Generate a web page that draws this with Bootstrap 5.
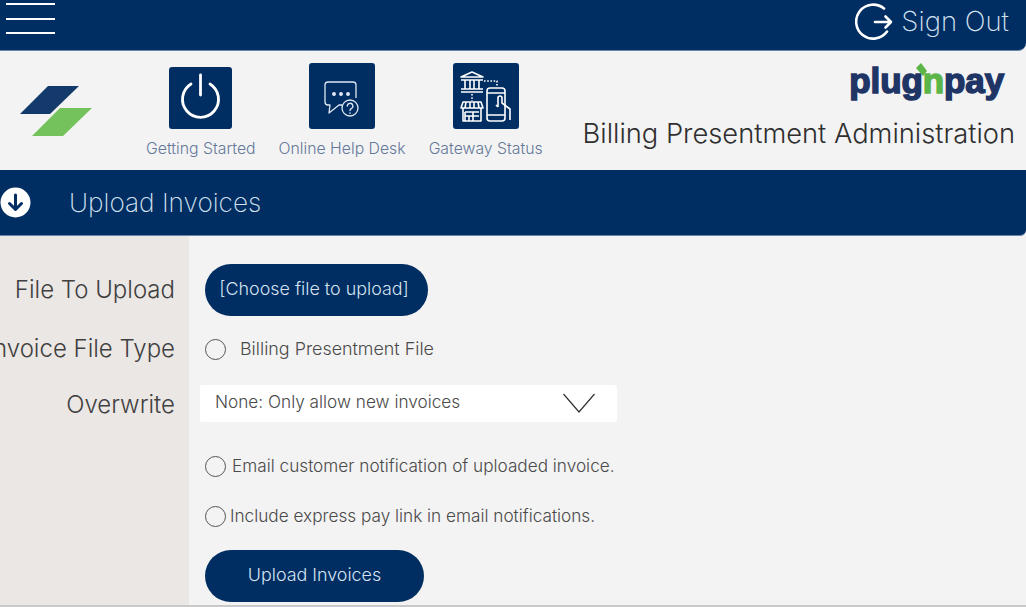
<!DOCTYPE html>
<html lang="en">

<head>
    <meta charset="UTF-8">
    <meta name="viewport" content="width=device-width, initial-scale=1">
    <title>Billing Presentment Administration</title>

    <link rel="stylesheet" href="https://cdn.jsdelivr.net/npm/bootstrap@5.3.2/dist/css/bootstrap.min.css">
    <script src="https://cdn.jsdelivr.net/npm/bootstrap@5.3.2/dist/js/bootstrap.bundle.min.js"></script>

    <style>
        html,
        body {
            height: 607px;
            overflow: hidden;
        }

        body {
            font-family: "Inter", "Liberation Sans", sans-serif;
            font-weight: 300;
            background: #f3f3f3;
            color: #3c3c3c;
        }

        .top-bar {
            height: 51px;
            background: #002d62;
            border-bottom-right-radius: 8px;
            border-bottom: 1px solid #6d85a8;
            padding: 0 17px 0 6px;
        }

        .menu-lines {
            width: 49px;
            height: 31px;
            margin-top: 3px;
            border: 0;
            padding: 0;
            background: none;
        }

        .menu-lines span {
            display: block;
            height: 2px;
            background: #fff;
        }

        .sign-out {
            color: #d5e3f1;
            font-size: 27.5px;
            font-weight: 200;
            text-decoration: none;
            gap: 8px;
            margin-bottom: 6px;
        }

        .head-strip {
            height: 119px;
            padding-left: 20px;
            padding-right: 11px;
        }

        .mark-box {
            width: 72px;
            height: 50px;
            margin-top: 35px;
        }

        .tile-nav {
            gap: 23px;
            margin-left: 54px;
            padding-top: 12px;
        }

        .tile-link {
            color: #64789a;
            font-size: 15.8px;
            text-decoration: none;
            white-space: nowrap;
        }

        .tile {
            background: #002d62;
            border-radius: 3px;
            margin-bottom: 8px;
        }

        .tile-low {
            margin-top: 4px;
        }

        .brand-side {
            text-align: right;
        }

        .plug-logo {
            font-family: "Liberation Sans", sans-serif;
            font-weight: 700;
            font-size: 35px;
            line-height: 1;
            letter-spacing: -.1px;
            color: #1e3566;
            -webkit-text-stroke: 1.5px #1e3566;
            position: relative;
            display: inline-block;
            margin-right: 11px;
            margin-top: 12px;
        }

        .plug-logo b {
            color: #5cb547;
            -webkit-text-stroke: 1.5px #5cb547;
        }

        .plug-logo svg {
            position: absolute;
            left: 66px;
            top: 0;
        }

        .bill-title {
            font-size: 27.3px;
            color: #2f2f2f;
            line-height: 1;
            margin-top: 21px;
            white-space: nowrap;
        }

        .section-bar {
            height: 66px;
            background: #002d62;
            border-bottom-right-radius: 6px;
            border-bottom: 1px solid #6d85a8;
            color: #d5e3f1;
            font-size: 26.2px;
            font-weight: 200;
            gap: 38px;
        }

        .form-grid {
            display: grid;
            grid-template-columns: 189px 1fr;
            grid-template-rows: 84px 58px 50px 62px 50px 1fr;
            height: 371px;
        }

        .lbl-cell {
            background: #ebe7e5;
            font-size: 24px;
            padding-right: 14px;
            white-space: nowrap;
            color: #404040;
        }

        .first-cell {
            padding-top: 28px;
        }

        .first-cell.lbl-cell {
            line-height: 52px;
        }

        .lbl-low {
            padding-top: 4px;
        }

        .pill-btn {
            background: #002d62;
            color: #d5e3f1;
            border-radius: 27px;
            height: 52px;
            font-size: 17.9px;
            font-weight: 300;
            padding: 0 0 2px;
        }

        .pill-btn:hover {
            background: #002d62;
            color: #d5e3f1;
        }

        .pick-btn {
            width: 223px;
            padding-right: 5px;
        }

        .send-btn {
            width: 219px;
            margin-top: 10px;
        }

        .ring {
            width: 21px;
            height: 21px;
            flex: none;
            margin: 0;
            background-color: transparent;
            border: 1.5px solid #555;
        }

        .opt-text {
            font-size: 17.2px;
            color: #4a4a4a;
            margin: 0;
            white-space: nowrap;
        }

        .opt-wide {
            font-size: 17.9px;
        }

        .opt-file {
            gap: 14px;
        }

        .opt-mail {
            padding-top: 14px;
            gap: 6px;
        }

        .opt-pay {
            padding-top: 2px;
            gap: 4px;
        }

        .over-select {
            width: 417px;
            height: 37px;
            margin-left: 11px;
            border: 0;
            border-radius: 2px;
            padding: 0 60px 2px 15px;
            background-color: #fff;
            background-image: url("data:image/svg+xml,%3csvg xmlns='http://www.w3.org/2000/svg' viewBox='0 0 32 20'%3e%3cpath fill='none' stroke='%23333' stroke-width='1.2' d='M0.5 1 16 19 31.5 1'/%3e%3c/svg%3e");
            background-position: right 22px center;
            background-size: 32px 20px;
            font-size: 17.2px;
            font-weight: 300;
            color: #4a4a4a;
        }

        .page-edge {
            position: absolute;
            left: 0;
            right: 0;
            bottom: 0;
            height: 2px;
            background: #c9c9c9;
        }
    </style>
</head>

<body>
    <header class="top-bar d-flex justify-content-between align-items-center">
        <button class="menu-lines d-flex flex-column justify-content-between align-self-start" type="button" aria-label="Menu">
            <span></span><span></span><span></span>
        </button>
        <a class="sign-out d-flex align-items-center" href="#">
            <svg width="38" height="38" viewBox="0 0 38 38" fill="none" stroke="#fff" stroke-width="2.6" stroke-linecap="round" stroke-linejoin="round">
                <path d="M29 5.500A17 17 0 1 0 32 28.500" />
                <path d="M20 19H36M30.500 13.500 36 19l-5.500 5.500" />
            </svg>
            Sign Out
        </a>
    </header>

    <div class="head-strip d-flex">
        <div class="mark-box">
            <svg width="72" height="50" viewBox="0 0 72 50">
                <polygon points="0,28 28,0 59,0 30,28" fill="#133a6b" />
                <polygon points="12,50 40,22 72,22 43,50" fill="#74c25c" />
            </svg>
        </div>

        <nav class="tile-nav d-flex flex-grow-1 align-items-start">
            <a class="tile-link d-flex flex-column align-items-center" href="#">
                <span class="tile tile-low d-flex align-items-center justify-content-center">
                    <svg width="63" height="62" viewBox="0 0 63 62" fill="none" stroke="#fff" stroke-width="2.8" stroke-linecap="round">
                        <path d="M22 17a18 18 0 1 0 19 0" />
                        <path d="M31.500 8V28" />
                    </svg>
                </span>
                Getting Started
            </a>
            <a class="tile-link d-flex flex-column align-items-center" href="#">
                <span class="tile d-flex align-items-center justify-content-center">
                    <svg width="66" height="66" viewBox="0 0 66 66" fill="none" stroke="#dfe8f3" stroke-width="1.300" stroke-linejoin="round">
                        <path d="M47 35V22a3 3 0 0 0-3-3H19a3 3 0 0 0-3 3V39a3 3 0 0 0 3 3h2l-1 8 10-8h3" />
                        <circle cx="25" cy="31" r="1.300" fill="#dfe8f3" />
                        <circle cx="32" cy="31" r="1.300" fill="#dfe8f3" />
                        <circle cx="39" cy="31" r="1.300" fill="#dfe8f3" />
                        <circle cx="41" cy="45" r="8" />
                        <path d="M38.300 43a2.800 2.800 0 1 1 4 2.600c-.9.500-1.300 1-1.300 2M41 50v.4" stroke-linecap="round" />
                    </svg>
                </span>
                Online Help Desk
            </a>
            <a class="tile-link d-flex flex-column align-items-center" href="#">
                <span class="tile d-flex align-items-center justify-content-center">
                    <svg width="66" height="66" viewBox="0 0 66 66" fill="none" stroke="#fff" stroke-width="1.600" stroke-linejoin="round">
                        <path d="M8 14 19 9 30 14ZM8 17H30M8 26H30M8 29H30M12 17V26M17 17V26M21 17V26M26 17V26" />
                        <path d="M31 18H44V24M19 31V38" stroke-dasharray="1.600 1.600" />
                        <path d="M10 39H28L30 45H8ZM13 39 12 45M17 39V45M21 39V45M25 39 26 45M10 45V58H28V45M12 49H26M12 53H26M12 49V58M16 53V58M20 49V58" />
                        <path d="M34 28a3 3 0 0 1 3-3H49a3 3 0 0 1 3 3V55a3 3 0 0 1-3 3H37a3 3 0 0 1-3-3ZM34 30H52M34 52H52" />
                        <path d="M45 44V35a2 2 0 0 1 4 0V40L57 46V57M45 44l-2-2" />
                    </svg>
                </span>
                Gateway Status
            </a>
        </nav>

        <div class="brand-side">
            <div class="plug-logo">
                <svg width="13" height="14" viewBox="0 0 13 14"><polygon points="1,5 6,0 12,8 8,13" fill="#5cb547" /></svg>
                plug<b>n</b>pay
            </div>
            <div class="bill-title">Billing Presentment Administration</div>
        </div>
    </div>

    <div class="section-bar d-flex align-items-center">
        <svg width="31" height="31" viewBox="0 0 31 31">
            <circle cx="15.500" cy="15.500" r="15" fill="#fff" />
            <path d="M15.500 8V22M9.500 16.500l6 6 6-6" fill="none" stroke="#002d62" stroke-width="3" stroke-linecap="round" stroke-linejoin="round" />
        </svg>
        <span>Upload Invoices</span>
    </div>

    <form class="form-grid" onsubmit="return false;">
        <label class="lbl-cell first-cell d-flex align-items-start justify-content-end">File To Upload</label>
        <div class="first-cell ps-3">
            <button class="btn pill-btn pick-btn" type="button">[Choose file to upload]</button>
        </div>

        <label class="lbl-cell d-flex align-items-center justify-content-end">Invoice File Type</label>
        <div class="opt-file d-flex align-items-center ps-3">
            <input class="form-check-input ring" type="radio" id="ftype">
            <label class="opt-text opt-wide" for="ftype">Billing Presentment File</label>
        </div>

        <label class="lbl-cell lbl-low d-flex align-items-center justify-content-end">Overwrite</label>
        <div class="d-flex align-items-center">
            <select class="form-select over-select">
                <option>None: Only allow new invoices</option>
            </select>
        </div>

        <div class="lbl-cell"></div>
        <div class="opt-mail d-flex align-items-center ps-3">
            <input class="form-check-input ring" type="radio" id="mailopt">
            <label class="opt-text" for="mailopt">Email customer notification of uploaded invoice.</label>
        </div>

        <div class="lbl-cell"></div>
        <div class="opt-pay d-flex align-items-center ps-3">
            <input class="form-check-input ring" type="radio" id="payopt">
            <label class="opt-text" for="payopt">Include express pay link in email notifications.</label>
        </div>

        <div class="lbl-cell"></div>
        <div class="ps-3">
            <button class="btn pill-btn send-btn" type="submit">Upload Invoices</button>
        </div>
    </form>

    <div class="page-edge"></div>
</body>

</html>
